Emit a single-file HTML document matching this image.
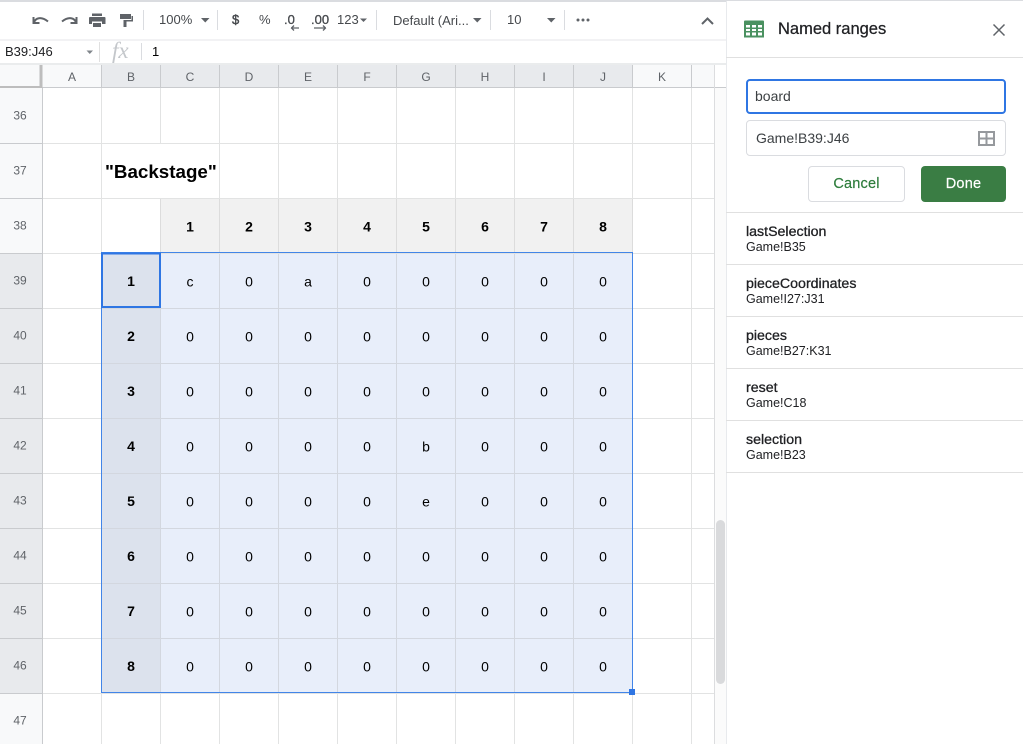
<!DOCTYPE html>
<html><head><meta charset="utf-8">
<style>
html,body{margin:0;padding:0;background:#fff}
body{width:1023px;height:744px;overflow:hidden;position:relative;font-family:"Liberation Sans",sans-serif;color:#202124}
.a{position:absolute;white-space:nowrap}
.tb{color:#46494d;font-size:13px}
.sep{position:absolute;width:1px;background:#dadce0;top:10px;height:20px}
.it b,.it span{position:absolute;left:20px;white-space:nowrap}
.it{position:absolute;left:726px;width:297px;height:52px;box-sizing:border-box;border-bottom:1px solid #e0e0e0}
.it b{top:11px;font-size:14.2px;font-weight:normal;-webkit-text-stroke:.3px #202124;color:#202124}
.it span{top:27px;font-size:12.5px;color:#202124}
svg{position:absolute;left:0;top:0}
</style></head><body>

<svg width="726" height="744" viewBox="0 0 726 744" style="font-family:'Liberation Sans',sans-serif">
<rect x="0" y="0" width="726" height="744" fill="#fff"/>
<rect x="0" y="63.500" width="726" height="1" fill="#d6d8db"/>
<rect x="0" y="39.500" width="726" height="1" fill="#e4e6e8"/>
<rect x="0" y="65" width="714" height="23" fill="#f8f9fa"/>
<rect x="102" y="65" width="531" height="23" fill="#e8eaed"/>
<rect x="0" y="88" width="42" height="656" fill="#f8f9fa"/>
<rect x="0" y="254" width="42" height="439" fill="#e8eaed"/>
<rect x="161" y="199" width="472" height="54" fill="#f1f1f1"/>
<rect x="102" y="254" width="59" height="438" fill="#dce2ed"/>
<rect x="161" y="254" width="471" height="438" fill="#e8eefa"/>
<g stroke="#e2e3e3" stroke-width="1">
<path d="M101.500 88V744M219.500 88V744M278.500 88V744M337.500 88V744M396.500 88V744M455.500 88V744M514.500 88V744M573.500 88V744M632.500 88V744M691.500 88V744M160.500 88V744"/>
<path d="M43 143.500H714M43 198.500H714M43 253.500H714M43 308.500H714M43 363.500H714M43 418.500H714M43 473.500H714M43 528.500H714M43 583.500H714M43 638.500H714M43 693.500H714"/>
</g>
<rect x="102" y="144" width="117" height="54" fill="#fff"/>
<path d="M219.500 144V198" stroke="#e2e3e3"/>
<g stroke="#d3d7df" stroke-width="1">
<path d="M160.500 254V692M219.500 254V692M278.500 254V692M337.500 254V692M396.500 254V692M455.500 254V692M514.500 254V692M573.500 254V692"/>
<path d="M102 308.500H632M102 363.500H632M102 418.500H632M102 473.500H632M102 528.500H632M102 583.500H632M102 638.500H632"/>
</g>
<path d="M160.500 199V253M219.500 199V253M278.500 199V253M337.500 199V253M396.500 199V253M455.500 199V253M514.500 199V253M573.500 199V253M632.500 199V253" stroke="#dcdcdc"/>
<g stroke="#c9cbce" stroke-width="1">
<path d="M42.500 88V744M0 87.500H726M101.500 65V88M160.500 65V88M219.500 65V88M278.500 65V88M337.500 65V88M396.500 65V88M455.500 65V88M514.500 65V88M573.500 65V88M632.500 65V88M691.500 65V88"/>
<path d="M0 143.500H42M0 198.500H42M0 253.500H42M0 308.500H42M0 363.500H42M0 418.500H42M0 473.500H42M0 528.500H42M0 583.500H42M0 638.500H42M0 693.500H42"/>
</g>
<path d="M714.500 65V744" stroke="#dcdddf"/>
<rect x="715" y="88" width="11" height="656" fill="#fbfbfb"/>
<rect x="715" y="65" width="11" height="22" fill="#fff"/>
<rect x="39.500" y="65" width="3" height="23" fill="#bdbdbd"/>
<rect x="0" y="86" width="42" height="2" fill="#bdbdbd"/>
<rect x="716" y="520" width="9" height="164" rx="4.500" fill="#d9dadc"/>
<rect x="101.500" y="252.500" width="531" height="440" fill="none" stroke="#4285e8" stroke-width="1"/>
<rect x="102" y="253.500" width="58" height="53.500" fill="none" stroke="#2f76e3" stroke-width="2"/>
<rect x="629" y="689" width="6" height="6" fill="#2f76e3"/>

<g font-size="12" fill="#5f6368" text-anchor="middle">
<text y="81"><tspan x="72">A</tspan><tspan x="131">B</tspan><tspan x="190">C</tspan><tspan x="249">D</tspan><tspan x="308">E</tspan><tspan x="367">F</tspan><tspan x="426">G</tspan><tspan x="485">H</tspan><tspan x="544">I</tspan><tspan x="603">J</tspan><tspan x="662">K</tspan></text>
<g font-size="12"><text x="20" y="119.500">36</text><text x="20" y="174.500">37</text><text x="20" y="229.500">38</text><text x="20" y="284.500">39</text><text x="20" y="339.500">40</text><text x="20" y="394.500">41</text><text x="20" y="449.500">42</text><text x="20" y="504.500">43</text><text x="20" y="559.500">44</text><text x="20" y="614.500">45</text><text x="20" y="669.500">46</text><text x="20" y="724.500">47</text></g>
</g>
<text x="105" y="178" font-size="18.800" font-weight="bold" fill="#000">"Backstage"</text>
<g font-size="14" font-weight="bold" fill="#000" text-anchor="middle">
<text y="231.500"><tspan x="190">1</tspan><tspan x="249">2</tspan><tspan x="308">3</tspan><tspan x="367">4</tspan><tspan x="426">5</tspan><tspan x="485">6</tspan><tspan x="544">7</tspan><tspan x="603">8</tspan></text>
<text x="131" y="286">1</text><text x="131" y="341">2</text><text x="131" y="396">3</text><text x="131" y="451">4</text><text x="131" y="506">5</text><text x="131" y="561">6</text><text x="131" y="616">7</text><text x="131" y="671">8</text>
</g>
<g font-size="14" fill="#000" text-anchor="middle">
<text y="286.500"><tspan x="190">c</tspan><tspan x="249">0</tspan><tspan x="308">a</tspan><tspan x="367">0</tspan><tspan x="426">0</tspan><tspan x="485">0</tspan><tspan x="544">0</tspan><tspan x="603">0</tspan></text>
<text y="341.500"><tspan x="190">0</tspan><tspan x="249">0</tspan><tspan x="308">0</tspan><tspan x="367">0</tspan><tspan x="426">0</tspan><tspan x="485">0</tspan><tspan x="544">0</tspan><tspan x="603">0</tspan></text>
<text y="396.500"><tspan x="190">0</tspan><tspan x="249">0</tspan><tspan x="308">0</tspan><tspan x="367">0</tspan><tspan x="426">0</tspan><tspan x="485">0</tspan><tspan x="544">0</tspan><tspan x="603">0</tspan></text>
<text y="451.500"><tspan x="190">0</tspan><tspan x="249">0</tspan><tspan x="308">0</tspan><tspan x="367">0</tspan><tspan x="426">b</tspan><tspan x="485">0</tspan><tspan x="544">0</tspan><tspan x="603">0</tspan></text>
<text y="506.500"><tspan x="190">0</tspan><tspan x="249">0</tspan><tspan x="308">0</tspan><tspan x="367">0</tspan><tspan x="426">e</tspan><tspan x="485">0</tspan><tspan x="544">0</tspan><tspan x="603">0</tspan></text>
<text y="561.500"><tspan x="190">0</tspan><tspan x="249">0</tspan><tspan x="308">0</tspan><tspan x="367">0</tspan><tspan x="426">0</tspan><tspan x="485">0</tspan><tspan x="544">0</tspan><tspan x="603">0</tspan></text>
<text y="616.500"><tspan x="190">0</tspan><tspan x="249">0</tspan><tspan x="308">0</tspan><tspan x="367">0</tspan><tspan x="426">0</tspan><tspan x="485">0</tspan><tspan x="544">0</tspan><tspan x="603">0</tspan></text>
<text y="671.500"><tspan x="190">0</tspan><tspan x="249">0</tspan><tspan x="308">0</tspan><tspan x="367">0</tspan><tspan x="426">0</tspan><tspan x="485">0</tspan><tspan x="544">0</tspan><tspan x="603">0</tspan></text>
</g>

<!-- toolbar icons -->
<path d="M34 22.500C35.500 18 41 16 48 21.500M33.500 17V23H39.500" fill="none" stroke="#5f6368" stroke-width="2"/>
<path d="M76 22.500C74.500 18 69 16 62 21.500M76.500 17V23H70.500" fill="none" stroke="#5f6368" stroke-width="2"/>
<path d="M92 13.500H102V16H92ZM90 17H104.500Q105.500 17 105.500 18V24H102V21.500H92V24H89V18Q89 17 90 17ZM93 23H101V27H93Z" fill="#5f6368"/>
<path d="M120 14H131V19H120ZM131.500 16H133V21.500H126.500V27H123.500V20H131.500Z" fill="#5f6368"/>
<path d="M201 18H209.500L205.250 22.500Z" fill="#5f6368"/>
<path d="M360 18.500H367L363.500 22Z" fill="#5f6368"/>
<path d="M473 18H481.500L477.250 22.500Z" fill="#5f6368"/>
<path d="M547 18H555.500L551.250 22.500Z" fill="#5f6368"/>
<path d="M291 28H299M294 25.500L291.500 28L294 30.500M314 28H326M323 25.500L325.500 28L323 30.500" fill="none" stroke="#5f6368" stroke-width="1.300"/>
<circle cx="578" cy="20" r="1.500" fill="#5f6368"/><circle cx="583" cy="20" r="1.500" fill="#5f6368"/><circle cx="588" cy="20" r="1.500" fill="#5f6368"/>
<path d="M702 24L707.500 18.500L713 24" fill="none" stroke="#5f6368" stroke-width="2"/>
<path d="M86.500 50.500H93L89.750 54Z" fill="#80868b"/>
<text x="112" y="58" font-family="'Liberation Serif',serif" font-style="italic" font-size="23" fill="#c4c7cb">fx</text>
</svg>

<div class="a" style="left:0;top:0;width:1023px;height:1.500px;background:#dadce0"></div>
<div class="sep" style="left:143px"></div>
<div class="sep" style="left:217px"></div>
<div class="sep" style="left:376px"></div>
<div class="sep" style="left:490px"></div>
<div class="sep" style="left:564px"></div>
<div class="a" style="left:99px;top:42px;width:1px;height:20px;background:#e0e0e0"></div>
<div class="a" style="left:141px;top:43px;width:1px;height:17px;background:#dadce0"></div>

<div class="a tb" style="left:159px;top:12px">100%</div>
<div class="a tb" style="left:232px;top:12px;-webkit-text-stroke:.4px #46494d">$</div>
<div class="a tb" style="left:259px;top:12px">%</div>
<div class="a tb" style="left:284px;top:12px;-webkit-text-stroke:.3px #46494d">.0</div>
<div class="a tb" style="left:311px;top:12px;-webkit-text-stroke:.3px #46494d">.00</div>
<div class="a tb" style="left:337px;top:12px">123</div>
<div class="a tb" style="left:393px;top:13px;font-size:13px">Default (Ari...</div>
<div class="a tb" style="left:507px;top:12px">10</div>
<div class="a" style="left:5px;top:44px;font-size:13px;color:#202124">B39:J46</div>
<div class="a" style="left:152px;top:44px;font-size:13px;color:#000">1</div>

<!-- side panel -->
<div class="a" style="left:726px;top:1px;width:297px;height:743px;background:#fff;border-left:1px solid #e8eaed;box-sizing:border-box"></div>
<div class="a" style="left:726px;top:57px;width:297px;height:1px;background:#e0e0e0"></div>
<svg style="left:744px;top:20px" width="20" height="18" viewBox="0 0 20 18"><path fill="#4a9160" d="M0 1.500Q0 .500 1 .500H19Q20 .500 20 1.500V17.500H0ZM2 5V7.500H6V5ZM8 5V7.500H12V5ZM14 5V7.500H18V5ZM2 9V11H6V9ZM8 9V11H12V9ZM14 9V11H18V9ZM2 12.500V15.500H6V12.500ZM8 12.500V15.500H12V12.500ZM14 12.500V15.500H18V12.500Z" fill-rule="evenodd"/></svg>
<div class="a" style="left:778px;top:20px;font-size:16.500px;color:#202124;-webkit-text-stroke:.25px #202124">Named ranges</div>
<svg style="left:992px;top:23px" width="14" height="14" viewBox="0 0 14 14"><path d="M1.500 1.500L12.500 12.500M12.500 1.500L1.500 12.500" stroke="#5f6368" stroke-width="1.500" fill="none"/></svg>

<div class="a" style="left:746px;top:79px;width:260px;height:35px;box-sizing:border-box;border:2px solid #2f76e3;border-radius:4px;font-size:14px;line-height:31px;padding-left:7px;color:#3c4043">board</div>
<div class="a" style="left:746px;top:120px;width:260px;height:36px;box-sizing:border-box;border:1px solid #dadce0;border-radius:4px;font-size:14px;line-height:35px;padding-left:9px;color:#3c4043">Game!B39:J46</div>
<svg style="left:978px;top:131px" width="17" height="15" viewBox="0 0 17 15"><path d="M1 1H16V14H1ZM8.500 1V14M1 7.500H16" stroke="#96999d" stroke-width="2" fill="none"/></svg>
<div class="a" style="left:808px;top:166px;width:97px;height:36px;box-sizing:border-box;border:1px solid #dadce0;border-radius:4px;font-size:14.500px;line-height:35px;text-align:center;color:#2e7d3c;letter-spacing:.2px;-webkit-text-stroke:.2px #2e7d3c">Cancel</div>
<div class="a" style="left:921px;top:166px;width:85px;height:36px;border-radius:4px;background:#3a7d44;font-size:14.500px;line-height:37px;text-align:center;color:#fff;letter-spacing:.2px;-webkit-text-stroke:.2px #fff">Done</div>
<div class="a" style="left:726px;top:212px;width:297px;height:1px;background:#e0e0e0"></div>

<div class="it" style="top:213px"><b>lastSelection</b><span>Game!B35</span></div>
<div class="it" style="top:265px"><b>pieceCoordinates</b><span>Game!I27:J31</span></div>
<div class="it" style="top:317px"><b>pieces</b><span>Game!B27:K31</span></div>
<div class="it" style="top:369px"><b>reset</b><span>Game!C18</span></div>
<div class="it" style="top:421px"><b>selection</b><span>Game!B23</span></div>
</body></html>
